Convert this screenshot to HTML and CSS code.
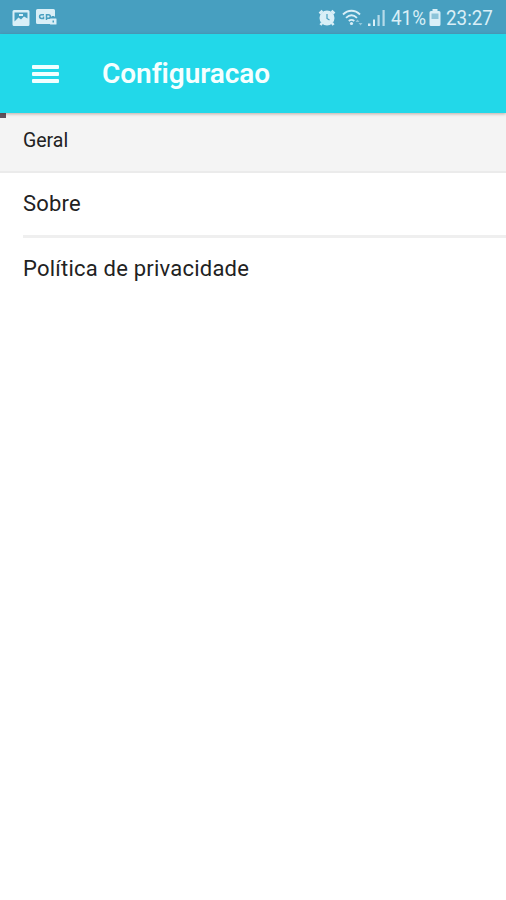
FILE: index.html
```html
<!DOCTYPE html>
<html lang="pt">
<head>
    <meta charset="UTF-8">
    <meta name="viewport" content="width=device-width, initial-scale=1.0">
    <title>Configuracao</title>
    <link rel="stylesheet" href="styles.css">
</head>
<body>
    <div class="status-bar">
        <div class="status-left">
            <svg width="18" height="16" viewBox="0 0 18 16">
                <path fill="currentColor" fill-rule="evenodd" d="M2 0h14a1.500 1.500 0 0 1 1.500 1.500v13a1.500 1.500 0 0 1-1.500 1.500H2a1.500 1.500 0 0 1-1.500-1.500v-13A1.500 1.500 0 0 1 2 0zM2.500 2.500v9l4-4 2.500 2 3-3 3.500 2v-6z"/>
                <path fill="currentColor" d="M7 4h4v2H7z"/>
            </svg>
            <svg width="22" height="17" viewBox="0 0 22 17">
                <path fill="currentColor" d="M1.500 0h16A1.500 1.500 0 0 1 19 1.500V8h-5v7H1.500A1.500 1.500 0 0 1 0 13.500v-12A1.500 1.500 0 0 1 1.500 0z"/>
                <path class="cut" d="M8 5.700H5.500a1.800 1.800 0 0 0 0 3.800h2V7.500M10.500 11V5.700h2a1.700 1.700 0 0 1 0 3.600h-2M15.500 7.700h3"/>
                <rect x="14" y="9.500" width="6.500" height="6" rx=".5" fill="currentColor"/>
                <rect x="16.500" y="11.500" width="1.500" height="2" fill="#479fc0"/>
            </svg>
        </div>
        <div class="status-right">
            <svg class="alarm" width="18" height="18" viewBox="0 0 18 18">
                <circle cx="9" cy="9" r="7.500" fill="currentColor"/>
                <path class="bell" d="M1.500 4.500l3-2.700M16.500 4.500l-3-2.700M4 14l-1.500 2M14 14l1.500 2"/>
                <path class="hands" d="M9 5v4.500l2.500 1.500"/>
            </svg>
            <svg class="wifi" width="22" height="18" viewBox="0 0 22 18">
                <path class="wave" d="M1 5.500c5-5 12-5 17 0M4 8.800c3.500-3.300 7.500-3.300 11 0M6.800 12c2-1.700 3.500-1.700 5.500 0"/>
                <circle cx="9.500" cy="14.500" r="1.600" fill="currentColor"/>
                <path fill="currentColor" opacity=".5" d="M13.500 13l2-2.500 2 2.500zM16.500 14h4l-2 2.500z"/>
            </svg>
            <svg class="signal" width="18" height="18" viewBox="0 0 18 18">
                <path fill="currentColor" d="M0 14.500h2.500V17H0zM5 10.500h2V17H5z"/>
                <path fill="currentColor" opacity=".75" d="M9.500 6h2.200v11H9.500zM14.500 1h2.200v16h-2.200z"/>
            </svg>
            <span class="percent">41%</span>
            <svg class="battery" width="12" height="18" viewBox="0 0 12 18">
                <path fill="currentColor" d="M3.500 0h5v2H10a1.500 1.500 0 0 1 1.500 1.500v12A1.500 1.500 0 0 1 10 17H2a1.500 1.500 0 0 1-1.500-1.500v-12A1.500 1.500 0 0 1 2 2h1.500z"/>
                <path fill="#8cc4d9" d="M2.500 4.500h7v5.500h-7z"/>
            </svg>
            <span class="time">23:27</span>
        </div>
    </div>

    <div class="toolbar">
        <div class="menu-button">
            <span></span>
            <span></span>
            <span></span>
        </div>
        <h1>Configuracao</h1>
    </div>

    <div class="section-header">Geral</div>
    <div class="list">
        <div class="item">Sobre</div>
        <div class="item">Política de privacidade</div>
    </div>
</body>
</html>
```

FILE: styles.css
```css
body {
    margin: 0;
    height: 900px;
    overflow: hidden;
    background-color: #fff;
    font-family: Roboto, sans-serif;
    color: #222;
}
svg {
    display: block;
    flex: none;
}
.status-bar {
    display: flex;
    justify-content: space-between;
    align-items: center;
    box-sizing: border-box;
    height: 34px;
    padding: 1px 13px 0 12px;
    background-color: #479fc0;
    color: #d9eff7;
}
.status-left,
.status-right {
    display: flex;
    align-items: center;
}
.status-left {
    gap: 6px;
}
.status-right {
    font-size: 20px;
    line-height: 33px;
    white-space: nowrap;
}
.cut,
.hands {
    fill: none;
    stroke: #479fc0;
    stroke-width: 1.5;
}
.hands {
    stroke-width: 1.2;
}
.bell {
    fill: none;
    stroke: currentColor;
    stroke-width: 2.5;
}
.wave {
    fill: none;
    stroke: currentColor;
    stroke-width: 1.8;
}
.alarm {
    margin-right: 6px;
}
.wifi {
    margin-right: 4px;
}
.signal {
    margin-right: 5px;
}
.percent,
.time {
    padding-top: 2px;
    line-height: 31px;
    transform: scaleX(0.94);
    transform-origin: left;
}
.percent {
    width: 34px;
    margin-right: 4px;
}
.battery {
    margin-right: 5px;
}
.time {
    width: 47px;
}
.toolbar {
    position: relative;
    z-index: 1;
    display: flex;
    align-items: center;
    height: 79px;
    padding-left: 32px;
    background-color: #22d8e9;
    box-shadow: 0 1px 3px rgba(90, 40, 20, 0.35);
}
.menu-button {
    display: flex;
    flex-direction: column;
    gap: 3px;
    width: 27px;
    margin-right: 43px;
}
.menu-button span {
    height: 4px;
    border-radius: 1px;
    background-color: #f2ffff;
}
.toolbar h1 {
    margin: 0;
    font-size: 28px;
    font-weight: 600;
    line-height: 36px;
    letter-spacing: -0.05px;
    color: #f5ffff;
}
.section-header {
    position: relative;
    box-sizing: border-box;
    height: 60px;
    padding: 16px 24px 0 23px;
    border-bottom: 2px solid #ebebeb;
    background-color: #f4f4f4;
    font-size: 19.5px;
    line-height: 24px;
}
.section-header::before {
    content: "";
    position: absolute;
    top: 0;
    left: 0;
    width: 6px;
    height: 5px;
    background-color: #62535e;
}
.list {
    padding-left: 23px;
}
.item {
    box-sizing: border-box;
    height: 65px;
    padding-top: 17px;
    font-size: 22px;
    line-height: 28px;
    letter-spacing: 0.22px;
}
.item:first-child {
    border-bottom: 3px solid #efefef;
}
```
